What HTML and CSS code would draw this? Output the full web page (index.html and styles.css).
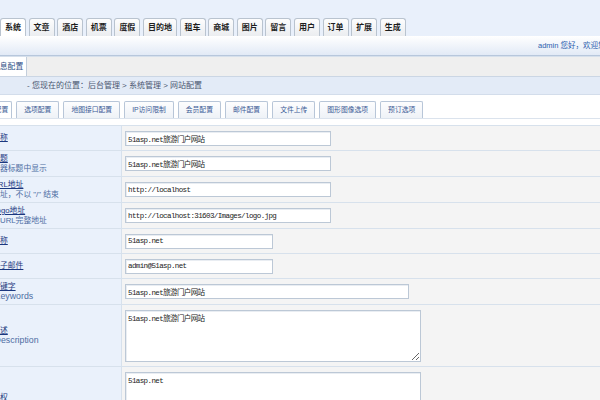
FILE: index.html
```html
<!DOCTYPE html>
<html lang="zh-CN">
<head>
<meta charset="utf-8">
<title>网站配置</title>
<link rel="stylesheet" href="styles.css">
</head>
<body>
<div class="topnav">
  <span class="tab active">系统</span>
  <span class="tab">文章</span>
  <span class="tab">酒店</span>
  <span class="tab">机票</span>
  <span class="tab">度假</span>
  <span class="tab">目的地</span>
  <span class="tab">租车</span>
  <span class="tab">商城</span>
  <span class="tab">图片</span>
  <span class="tab">留言</span>
  <span class="tab">用户</span>
  <span class="tab">订单</span>
  <span class="tab">扩展</span>
  <span class="tab">生成</span>
</div>
<div class="userbar"><span>admin 您好，欢迎您使用51asp.net旅游门户网站管理系统</span></div>
<div class="subhead"><span class="subtab">信息配置</span></div>
<div class="crumb">- 您现在的位置：后台管理 &gt; 系统管理 &gt; 网站配置</div>
<div class="stabs">
  <span class="stab active">基本配置</span>
  <span class="stab">选项配置</span>
  <span class="stab">地图接口配置</span>
  <span class="stab">IP访问限制</span>
  <span class="stab">会员配置</span>
  <span class="stab">邮件配置</span>
  <span class="stab">文件上传</span>
  <span class="stab">图形图像选项</span>
  <span class="stab">预订选项</span>
</div>
<table class="form">
  <tr>
    <td class="lbl"><div class="lt"><span class="t">网站名称</span></div></td>
    <td class="val"><input class="inp w1" type="text" value="51asp.net旅游门户网站"></td>
  </tr>
  <tr>
    <td class="lbl"><div class="lt"><span class="t">网站标题</span><br><span class="d">在浏览器标题中显示</span></div></td>
    <td class="val"><input class="inp w1" type="text" value="51asp.net旅游门户网站"></td>
  </tr>
  <tr>
    <td class="lbl"><div class="lt"><span class="t">网站URL地址</span><br><span class="d">网站地址，不以 "/" 结束</span></div></td>
    <td class="val"><input class="inp w1" type="text" value="http://localhost"></td>
  </tr>
  <tr>
    <td class="lbl"><div class="lt"><span class="t">网站Logo地址</span><br><span class="d">请填写URL完整地址</span></div></td>
    <td class="val"><input class="inp w1" type="text" value="http://localhost:31603/Images/logo.jpg"></td>
  </tr>
  <tr>
    <td class="lbl"><div class="lt"><span class="t">公司名称</span></div></td>
    <td class="val"><input class="inp w2" type="text" value="51asp.net"></td>
  </tr>
  <tr>
    <td class="lbl"><div class="lt"><span class="t">网站电子邮件</span></div></td>
    <td class="val"><input class="inp w2" type="text" value="admin@51asp.net"></td>
  </tr>
  <tr>
    <td class="lbl"><div class="lt"><span class="t">网站关键字</span><br><span class="d en">Meta Keywords</span></div></td>
    <td class="val"><input class="inp w3" type="text" value="51asp.net旅游门户网站"></td>
  </tr>
  <tr>
    <td class="lbl"><div class="lt"><span class="t">网站描述</span><br><span class="d en">Meta Description</span></div></td>
    <td class="val"><textarea class="inp area">51asp.net旅游门户网站</textarea></td>
  </tr>
  <tr>
    <td class="lbl"><div class="lt"><span class="t">网站版权</span></div></td>
    <td class="val"><textarea class="inp area">51asp.net</textarea></td>
  </tr>
</table>
</body>
</html>
```
FILE: styles.css
```css
html, body {
  margin: 0;
  padding: 0;
  overflow: hidden;
}
body {
  width: 600px;
  height: 400px;
  background: #ffffff;
  font-family: "Liberation Sans", "Noto Sans CJK SC", sans-serif;
  font-size: 7.8px;
  color: #333;
}

/* top module tabs */
.topnav {
  display: flex;
  gap: 2.6px;
  height: 18px;
  padding-top: 18px;
  background: #e9f0fb;
}
.tab {
  box-sizing: border-box;
  height: 18px;
  padding: 0 4px;
  border: 1px solid #b9c3cf;
  border-bottom: none;
  border-radius: 3px 3px 0 0;
  background: linear-gradient(#fdfdfd, #ebedf0);
  font-weight: bold;
  font-size: 8px;
  line-height: 17px;
  color: #1e1e1e;
  white-space: nowrap;
}
.tab.active {
  background: #ffffff;
}

/* user bar */
.userbar {
  height: 19px;
  line-height: 19px;
  padding-left: 538px;
  background: linear-gradient(#ffffff, #e2eaf6);
  border-bottom: 1px solid #b7c7dc;
  white-space: nowrap;
  overflow: hidden;
  color: #2d5fae;
  font-size: 7.5px;
}

/* sub header */
.subhead {
  display: flex;
  height: 19px;
  background: #efefef;
  border-top: 1px solid #d6e0ec;
  border-bottom: 1px solid #cbd6e4;
}
.subtab {
  margin-left: -11px;
  padding: 0 3px;
  background: #ffffff;
  border-right: 1px solid #c3cedb;
  line-height: 19px;
  color: #2f4f86;
  white-space: nowrap;
}

/* breadcrumb */
.crumb {
  height: 17px;
  line-height: 17px;
  padding-left: 27px;
  background: #e3ebf7;
  border-bottom: 1px solid #d3ddeb;
  color: #4a5670;
  font-size: 8px;
  white-space: nowrap;
}

/* section tabs */
.stabs {
  display: flex;
  gap: 4px;
  padding-top: 6px;
  border-bottom: 1px solid #dbe3ed;
}
.stab {
  box-sizing: border-box;
  height: 17px;
  line-height: 16px;
  padding: 0 7px;
  border: 1px solid #b8c6d8;
  border-bottom: none;
  border-radius: 2px 2px 0 0;
  background: linear-gradient(#fdfdfe, #eef2f7);
  color: #3a5a95;
  font-size: 6.8px;
  white-space: nowrap;
}
.stab.active {
  margin-left: -27px;
  padding-right: 3px;
  background: #ffffff;
}

/* form table */
.form {
  width: 100%;
  margin-top: 6px;
  border-collapse: collapse;
  border-top: 1px solid #d7e1ec;
}
.form td {
  padding: 3px 0;
  border-bottom: 1px solid #d7e1ec;
  vertical-align: middle;
}
.form .lbl {
  width: 121px;
  background: #eaf1fb;
  border-right: 1px solid #d7e1ec;
}
.form .val {
  padding-left: 3px;
  background: #f4f4f4;
}
.lt {
  margin-left: -23.4px;
  line-height: 9.5px;
  white-space: nowrap;
}
.lt .t {
  color: #1b3880;
  text-decoration: underline;
}
.lt .d {
  color: #4d6da3;
}
.lt .d.en {
  display: inline-block;
  margin-left: -4px;
  font-size: 8.8px;
}

.inp {
  display: block;
  box-sizing: border-box;
  height: 15px;
  margin: 1.5px 0;
  padding: 0 2px;
  border: 1px solid #bcc8d6;
  box-shadow: inset 1px 1px 0 #e9edf2;
  background: #ffffff;
  font-family: "Liberation Mono", "Noto Sans CJK SC", monospace;
  font-size: 7.5px;
  letter-spacing: -0.6px;
  color: #222;
  outline: none;
}
.w1 { width: 206px; }
.w2 { width: 148px; }
.w3 { width: 284px; }
.area {
  width: 296px;
  height: 52px;
  padding: 3px 2px;
  line-height: 10px;
  resize: both;
}
```
